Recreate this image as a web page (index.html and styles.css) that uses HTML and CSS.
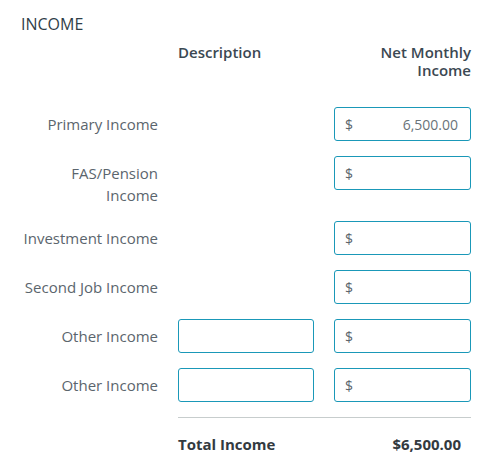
FILE: index.html
```html
<!DOCTYPE html>
<html>
<head>
<meta charset="utf-8">
<link rel="stylesheet" href="styles.css">
</head>
<body>
<div class="panel">
  <h2 class="title">INCOME</h2>
  <div class="form">
    <div></div>
    <div class="head head-left">Description</div>
    <div class="head head-right">Net Monthly<br>Income</div>

    <div class="label first">Primary Income</div>
    <div></div>
    <div class="field first"><span class="cur">$</span><span class="val">6,500.00</span></div>

    <div class="label">FAS/Pension<br>Income</div>
    <div></div>
    <div class="field"><span class="cur">$</span><span class="val"></span></div>

    <div class="label">Investment Income</div>
    <div></div>
    <div class="field"><span class="cur">$</span><span class="val"></span></div>

    <div class="label">Second Job Income</div>
    <div></div>
    <div class="field"><span class="cur">$</span><span class="val"></span></div>

    <div class="label">Other Income</div>
    <div class="field"></div>
    <div class="field"><span class="cur">$</span><span class="val"></span></div>

    <div class="label">Other Income</div>
    <div class="field"></div>
    <div class="field"><span class="cur">$</span><span class="val"></span></div>

    <div></div>
    <div class="total">
      <span>Total Income</span>
      <span class="total-val">$6,500.00</span>
    </div>
  </div>
</div>
</body>
</html>
```

FILE: styles.css
```css
html, body {
  margin: 0;
  padding: 0;
  background: #ffffff;
}
body {
  font-family: "Open Sans", "Liberation Sans", sans-serif;
  font-size: 15px;
  color: #5b656d;
}
.panel {
  padding: 13px 0 0 0;
  width: 492px;
}
.title {
  margin: 0 0 0 21px;
  font-size: 16px;
  line-height: 22px;
  font-weight: 400;
  color: #2f3e48;
}
.form {
  display: grid;
  grid-template-columns: 158px 136px 137px;
  column-gap: 20px;
  row-gap: 15px;
  align-items: start;
  margin-top: 8px;
}
.head {
  font-size: 15px;
  font-weight: 600;
  line-height: 18px;
  color: #3b4852;
  margin-bottom: 13px;
}
.head-left { text-align: left; }
.head-right { text-align: right; }
.label {
  text-align: right;
  line-height: 22px;
  padding-top: 6px;
  color: #5b656d;
}
.field {
  box-sizing: border-box;
  height: 34px;
  border: 1px solid #1a98b8;
  border-radius: 3px;
  display: flex;
  align-items: center;
  justify-content: space-between;
  padding: 0 12px 0 10px;
  background: #fff;
  font-size: 14px;
  color: #5b656d;
}
.val { color: #6a7379; }
.total {
  grid-column: 2 / 4;
  border-top: 1px solid #c7cdcd;
  margin-top: 0;
  padding: 15px 10px 0 0;
  display: flex;
  justify-content: space-between;
  line-height: 22px;
  font-weight: 700;
  color: #333a3f;
}
```
